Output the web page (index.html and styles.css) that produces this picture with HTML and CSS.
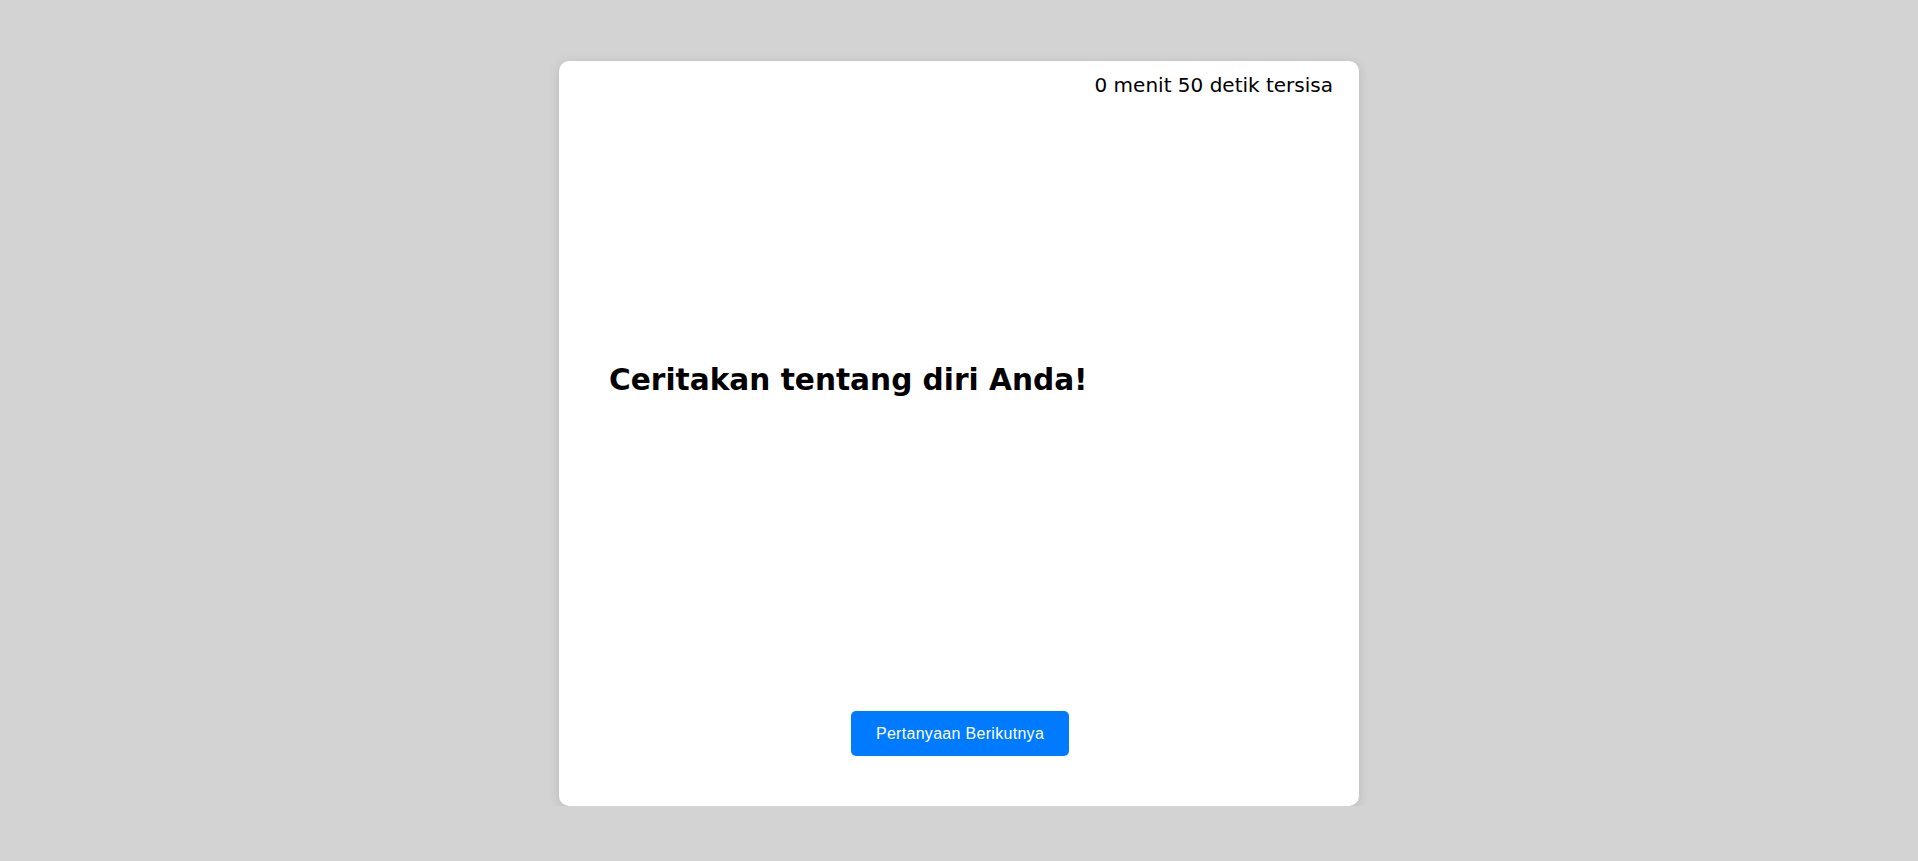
FILE: index.html
```html
<!DOCTYPE html>
<html lang="id">
<head>
<meta charset="utf-8">
<title>Pertanyaan</title>
<link rel="stylesheet" href="styles.css">
</head>
<body>
<div class="page">
  <div class="card">
    <div class="timer">0 menit 50 detik tersisa</div>
    <div class="question">
      <h1 class="question-title">Ceritakan tentang diri Anda!</h1>
    </div>
    <div class="actions">
      <button class="next-btn" type="button">Pertanyaan Berikutnya</button>
    </div>
  </div>
</div>
</body>
</html>
```

FILE: styles.css
```css
html, body {
  margin: 0;
  padding: 0;
}
body {
  background: #d3d3d3;
  font-family: "DejaVu Sans", sans-serif;
  color: #000;
}
.page {
  display: flex;
  justify-content: center;
  padding-top: 61px;
}
.card {
  width: 800px;
  height: 745px;
  box-sizing: border-box;
  background: #fff;
  border-radius: 10px;
  box-shadow: 0 2px 12px rgba(0, 0, 0, 0.12);
  display: flex;
  flex-direction: column;
  padding: 13px 26px 50px 50px;
}
.timer {
  align-self: flex-end;
  font-size: 20px;
  line-height: 23px;
}
.question {
  flex: 1;
  padding-top: 266px;
}
.question-title {
  margin: 0;
  font-size: 29.6px;
  font-weight: bold;
  line-height: 35px;
}
.actions {
  display: flex;
  justify-content: center;
  margin-left: -22px;
}
.next-btn {
  font-family: "Liberation Sans", Arial, sans-serif;
  font-size: 16px;
  letter-spacing: 0.3px;
  color: #fff;
  background: #007bff;
  border: none;
  border-radius: 5px;
  width: 218px;
  height: 45px;
  padding: 0;
  cursor: pointer;
}
```
